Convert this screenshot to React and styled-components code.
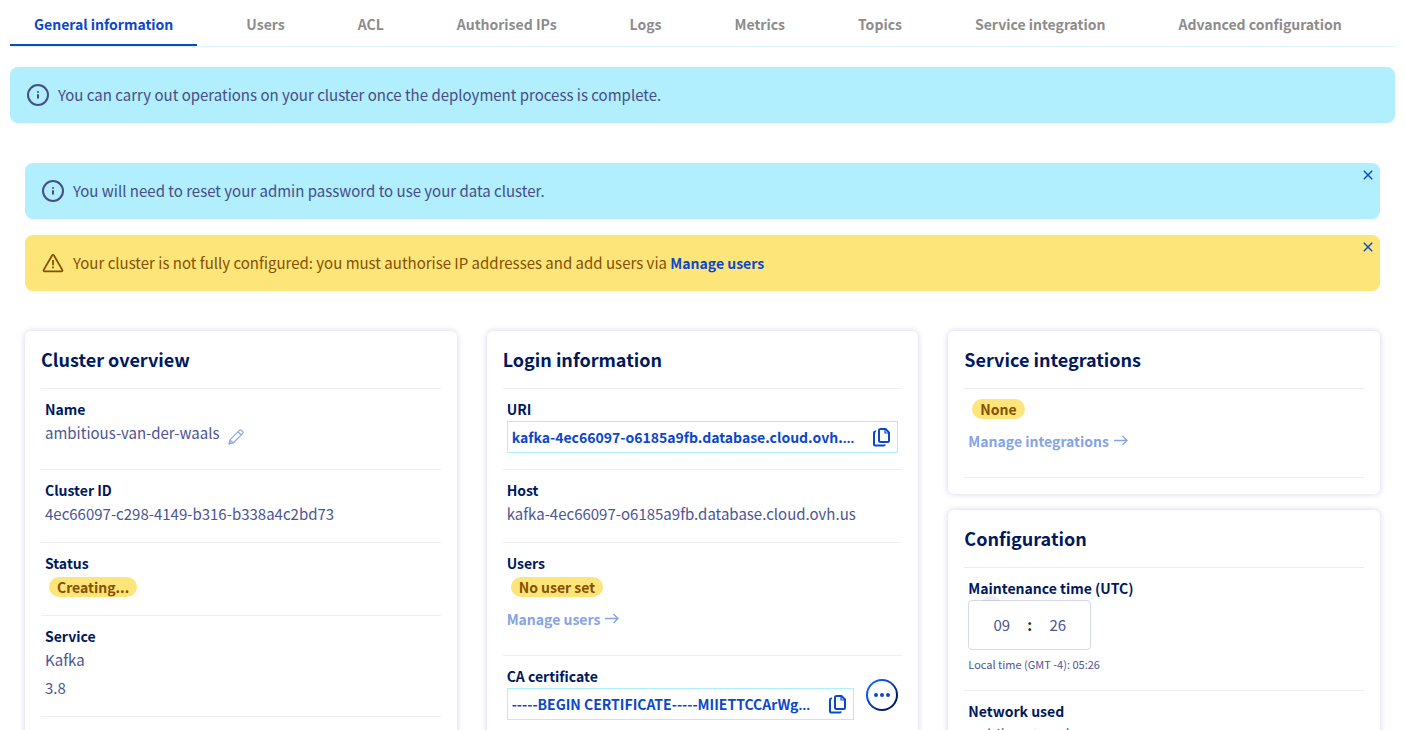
import React, { useState } from 'react'
import styled, { createGlobalStyle, ThemeProvider } from 'styled-components'

const fontFamily = "'Noto Sans CJK KR', 'Noto Sans', sans-serif"

const theme = {
  primary: '#0b47cc',
  heading: '#00185e',
  text: '#4d5592',
  muted: '#8c8c8c',
  link: '#85a3e6',
  info: '#b1eefe',
  infoText: '#484d87',
  warning: '#fde579',
  warningText: '#855000',
  line: '#eeeeee',
  copyBorder: '#aeeffb',
}

const GlobalStyle = createGlobalStyle`
  * {
    box-sizing: border-box;
  }

  body {
    margin: 0;
    background: #fff;
    color: ${theme.text};
    font: 400 15px/24px ${fontFamily};
  }

  button, input {
    font: inherit;
    color: inherit;
  }
`

const Page = styled.main`
  padding: 0 10px;
  height: 100vh;
  overflow: hidden;
`

const Tabs = styled.nav`
  display: flex;
  gap: 25px;
  border-bottom: 1px solid #dcf3fb;
`

const Tab = styled.a`
  padding: 12px 24px 8px;
  border-bottom: 2px solid ${({ theme, $active }) => ($active ? theme.primary : 'transparent')};
  color: ${({ theme, $active }) => ($active ? theme.primary : theme.muted)};
  font-size: 14px;
  font-weight: 600;
  text-decoration: none;
  white-space: nowrap;
`

const Banner = styled.div`
  position: relative;
  display: flex;
  align-items: center;
  gap: 8px;
  min-height: 56px;
  padding: 0 16px;
  border-radius: 8px;
  background: ${({ theme, $warning }) => ($warning ? theme.warning : theme.info)};
  color: ${({ theme, $warning }) => ($warning ? theme.warningText : theme.infoText)};
`

const CloseButton = styled.button`
  position: absolute;
  top: 4px;
  right: 4px;
  display: flex;
  padding: 3px;
  border: 0;
  background: none;
  color: ${({ theme }) => theme.primary};
  cursor: pointer;
`

const BannerLink = styled.a`
  color: ${({ theme }) => theme.primary};
  font-size: 14px;
  font-weight: 600;
  text-decoration: none;
`

const TopMessage = styled.div`
  margin-top: 20px;
`

const Content = styled.div`
  padding: 40px 15px 0;
`

const Messages = styled.div`
  display: grid;
  gap: 16px;
`

const Columns = styled.div`
  display: grid;
  grid-template-columns: repeat(3, minmax(0, 1fr));
  gap: 30px;
  margin-top: 40px;
`

const Column = styled.div`
  display: flex;
  flex-direction: column;
  gap: 16px;
`

const Card = styled.section`
  flex: ${({ $grow }) => ($grow ? '1 0 auto' : 'none')};
  padding: 16px;
  border-radius: 6px;
  background: #fff;
  box-shadow: 0 0 6px rgba(0, 0, 150, 0.18);
`

const CardTitle = styled.h2`
  margin: 0;
  padding-bottom: 17px;
  color: ${({ theme }) => theme.heading};
  font-size: 18px;
  font-weight: 700;
  line-height: 24px;
`

const Field = styled.div`
  padding: 8px 4px ${({ $roomy }) => ($roomy ? '24px' : '16px')};
  border-top: 1px solid ${({ theme }) => theme.line};
`

const Divider = styled.hr`
  height: 1px;
  margin: 0;
  border: 0;
  background: ${({ theme }) => theme.line};
`

const Label = styled.div`
  color: ${({ theme }) => theme.heading};
  font-size: 14px;
  font-weight: 600;
`

const Value = styled.div`
  overflow-wrap: anywhere;

  & + & {
    margin-top: 4px;
  }
`

const NameRow = styled.div`
  display: flex;
  align-items: flex-end;
  gap: 8px;
`

const IconButton = styled.button`
  display: flex;
  padding: 0;
  border: 0;
  background: none;
  color: ${({ theme, $faded }) => ($faded ? theme.link : theme.primary)};
  cursor: pointer;
`

const Badge = styled.span`
  display: block;
  width: fit-content;
  margin: 2px 4px;
  padding: 0 8px;
  border-radius: 10px;
  background: ${({ theme }) => theme.warning};
  color: ${({ theme }) => theme.warningText};
  font-size: 14px;
  font-weight: 600;
  line-height: 20px;
`

const ManageLink = styled.a`
  display: flex;
  align-items: center;
  gap: 5px;
  width: fit-content;
  margin-top: 10px;
  color: ${({ theme }) => theme.link};
  font-size: 14px;
  font-weight: 600;
  text-decoration: none;
`

const CopyBox = styled.div`
  display: flex;
  align-items: center;
  gap: 12px;
  height: 32px;
  padding: 0 6px 0 4px;
  border: 1px solid ${({ theme }) => theme.copyBorder};
`

// the ellipsis takes the font of this box: CJK fonts centre it vertically
const CopyText = styled.span`
  flex: 1;
  overflow: hidden;
  color: ${({ theme }) => theme.primary};
  font-family: 'Noto Sans', sans-serif;
  font-size: 14px;
  font-weight: 600;
  text-overflow: ellipsis;
  white-space: nowrap;

  span {
    font-family: ${fontFamily};
  }
`

const Certificate = styled.div`
  display: flex;
  align-items: center;
  gap: 12px;
`

const CertificateBody = styled.div`
  flex: 1;
  min-width: 0;
`

const MenuButton = styled.button`
  display: flex;
  align-items: center;
  justify-content: center;
  width: 32px;
  height: 32px;
  margin-top: 6px;
  padding: 0;
  border: 2px solid transparent;
  border-radius: 50%;
  background:
    linear-gradient(#fff, #fff) padding-box,
    linear-gradient(135deg, #0a5bff 20%, #00185e 80%) border-box;
  color: ${({ theme }) => theme.primary};
  cursor: pointer;
`

const TimeBox = styled.div`
  position: relative;
  display: flex;
  align-items: center;
  justify-content: center;
  gap: 8px;
  width: fit-content;
  height: 50px;
  padding: 0 15px;
  border: 1px solid #d5dbe2;
  border-radius: 4px;
  color: #222;
  font-weight: 700;
`

const TimePointer = styled.span`
  position: absolute;
  bottom: 100%;
  left: 12px;
  border: 10px solid transparent;
  border-top: 0;
  border-bottom: 7px solid rgba(80, 80, 190, 0.1);
`

const TimeInput = styled.input`
  width: 35px;
  padding: 0;
  border: 0;
  outline: 0;
  background: transparent;
  color: ${({ theme }) => theme.text};
  font-weight: 400;
  text-align: center;
`

const LocalTime = styled.div`
  margin-top: 4px;
  font-size: 11px;
  line-height: 20px;
`

const InfoIcon = () => (
  <svg width="24" height="24" viewBox="0 0 24 24" fill="none" aria-hidden="true">
    <circle cx="12" cy="12" r="10" stroke="currentColor" strokeWidth="2" />
    <path d="M12 11.2V15.500M12 8.300v1.500" stroke="currentColor" strokeWidth="2" />
  </svg>
)

const WarningIcon = () => (
  <svg width="24" height="24" viewBox="0 0 24 24" fill="none" stroke="currentColor" strokeWidth="1.8" aria-hidden="true">
    <path d="M11.2 4.3a1 1 0 0 1 1.6 0l8.5 14.6a.9.9 0 0 1-.8 1.4h-17a.9.9 0 0 1-.8-1.4z" strokeLinejoin="round" />
    <path d="M12 9v5.2M12 15.6v1.7" />
  </svg>
)

const CloseIcon = () => (
  <svg width="10" height="10" viewBox="0 0 10 10" fill="none" stroke="currentColor" strokeWidth="1.4" aria-hidden="true">
    <path d="M.8.8l8.4 8.4M9.2.8L.8 9.2" />
  </svg>
)

const PencilIcon = () => (
  <svg width="16" height="16" viewBox="0 0 16 16" fill="none" stroke="currentColor" strokeWidth="1.1" strokeLinejoin="round" aria-hidden="true">
    <path d="M1 15l1-4.2L11.4 1.4c.6-.6 1.5-.6 2.1 0l1.1 1.1c.6.6.6 1.5 0 2.1L5.2 14zM2 10.8L5.2 14M10 2.8L13.2 6M1 15l1.8-1.8" />
  </svg>
)

const CopyIcon = () => (
  <svg width="18" height="20" viewBox="0 0 18 20" fill="none" stroke="currentColor" strokeWidth="2" strokeLinejoin="round" aria-hidden="true">
    <path d="M7.500 2H12.500l3.500 3.500v8a1.500 1.500 0 0 1-1.500 1.500h-7A1.500 1.500 0 0 1 6 13.500v-10A1.500 1.500 0 0 1 7.500 2z" />
    <path d="M12 2.500V6h3.500" strokeWidth="1.200" />
    <path d="M3 4.500a1.500 1.500 0 0 0-2 1.500v11.500a1 1 0 0 0 1 1h8.500a1.500 1.500 0 0 0 1.500-1" />
  </svg>
)

const ArrowIcon = () => (
  <svg width="14" height="12" viewBox="0 0 14 12" fill="none" stroke="currentColor" strokeWidth="1.300" aria-hidden="true">
    <path d="M0 5.500h13M8.500 1L13 5.500 8.500 10" />
  </svg>
)

const DotsIcon = () => (
  <svg width="16" height="4" viewBox="0 0 16 4" fill="currentColor" aria-hidden="true">
    <circle cx="2" cy="2" r="2" />
    <circle cx="8" cy="2" r="2" />
    <circle cx="14" cy="2" r="2" />
  </svg>
)

const TABS = [
  'General information',
  'Users',
  'ACL',
  'Authorised IPs',
  'Logs',
  'Metrics',
  'Topics',
  'Service integration',
  'Advanced configuration',
]

const HOST = 'kafka-4ec66097-o6185a9fb.database.cloud.ovh.us'

function CopyField({ text }) {
  return (
    <CopyBox>
      <CopyText>
        <span>{text}</span>
      </CopyText>
      <IconButton aria-label="Copy" onClick={() => navigator.clipboard?.writeText(text)}>
        <CopyIcon />
      </IconButton>
    </CopyBox>
  )
}

function Message({ warning, onClose, children }) {
  return (
    <Banner $warning={warning}>
      {warning ? <WarningIcon /> : <InfoIcon />}
      <span>{children}</span>
      {onClose && (
        <CloseButton aria-label="Close" onClick={onClose}>
          <CloseIcon />
        </CloseButton>
      )}
    </Banner>
  )
}

export default function App() {
  const [activeTab, setActiveTab] = useState(TABS[0])
  const [showReset, setShowReset] = useState(true)
  const [showSetup, setShowSetup] = useState(true)
  const [hours, setHours] = useState('09')
  const [minutes, setMinutes] = useState('26')

  return (
    <ThemeProvider theme={theme}>
      <GlobalStyle />
      <Page>
        <Tabs>
          {TABS.map((tab) => (
            <Tab key={tab} href="#" $active={tab === activeTab} onClick={() => setActiveTab(tab)}>
              {tab}
            </Tab>
          ))}
        </Tabs>
        <TopMessage>
          <Message>You can carry out operations on your cluster once the deployment process is complete.</Message>
        </TopMessage>
        <Content>
          <Messages>
            {showReset && (
              <Message onClose={() => setShowReset(false)}>
                You will need to reset your admin password to use your data cluster.
              </Message>
            )}
            {showSetup && (
              <Message warning onClose={() => setShowSetup(false)}>
                Your cluster is not fully configured: you must authorise IP addresses and add users via{' '}
                <BannerLink href="#">Manage users</BannerLink>
              </Message>
            )}
          </Messages>
          <Columns>
            <Column>
              <Card $grow>
                <CardTitle>Cluster overview</CardTitle>
                <Field $roomy>
                  <Label>Name</Label>
                  <NameRow>
                    <Value>ambitious-van-der-waals</Value>
                    <IconButton $faded aria-label="Edit name">
                      <PencilIcon />
                    </IconButton>
                  </NameRow>
                </Field>
                <Field>
                  <Label>Cluster ID</Label>
                  <Value>4ec66097-c298-4149-b316-b338a4c2bd73</Value>
                </Field>
                <Field>
                  <Label>Status</Label>
                  <Badge>Creating...</Badge>
                </Field>
                <Field>
                  <Label>Service</Label>
                  <Value>Kafka</Value>
                  <Value>3.8</Value>
                </Field>
                <Divider />
              </Card>
            </Column>
            <Column>
              <Card $grow>
                <CardTitle>Login information</CardTitle>
                <Field>
                  <Label>URI</Label>
                  <CopyField text={`${HOST}:20187`} />
                </Field>
                <Field>
                  <Label>Host</Label>
                  <Value>{HOST}</Value>
                </Field>
                <Field $roomy>
                  <Label>Users</Label>
                  <Badge>No user set</Badge>
                  <ManageLink href="#">
                    Manage users <ArrowIcon />
                  </ManageLink>
                </Field>
                <Field>
                  <Certificate>
                    <CertificateBody>
                      <Label>CA certificate</Label>
                      <CopyField text="-----BEGIN CERTIFICATE-----MIIETTCCArWgAwIBAgIUK" />
                    </CertificateBody>
                    <MenuButton aria-label="Certificate actions">
                      <DotsIcon />
                    </MenuButton>
                  </Certificate>
                </Field>
              </Card>
            </Column>
            <Column>
              <Card>
                <CardTitle>Service integrations</CardTitle>
                <Field $roomy>
                  <Badge>None</Badge>
                  <ManageLink href="#">
                    Manage integrations <ArrowIcon />
                  </ManageLink>
                </Field>
                <Divider />
              </Card>
              <Card $grow>
                <CardTitle>Configuration</CardTitle>
                <Field>
                  <Label id="maintenance">Maintenance time (UTC)</Label>
                  <TimeBox role="group" aria-labelledby="maintenance">
                    <TimePointer />
                    <TimeInput aria-label="Hours" value={hours} onChange={(e) => setHours(e.target.value)} />
                    :
                    <TimeInput aria-label="Minutes" value={minutes} onChange={(e) => setMinutes(e.target.value)} />
                  </TimeBox>
                  <LocalTime>Local time (GMT -4): 05:26</LocalTime>
                </Field>
                <Field>
                  <Label>Network used</Label>
                  <Value>Public network</Value>
                </Field>
              </Card>
            </Column>
          </Columns>
        </Content>
      </Page>
    </ThemeProvider>
  )
}
